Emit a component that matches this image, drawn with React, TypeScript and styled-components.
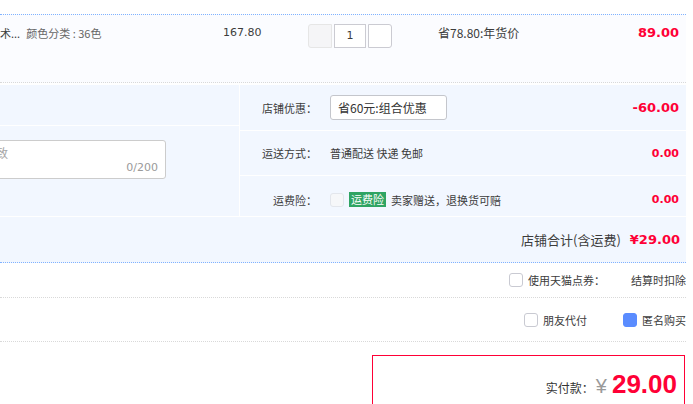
import React from "react";
import styled, { createGlobalStyle } from "styled-components";

const Global = createGlobalStyle`
  * { box-sizing: border-box; }
  html, body { margin: 0; padding: 0; background: #fff; overflow: hidden; }
  body {
    font-family: "Noto Sans CJK SC", "Noto Sans", sans-serif;
    font-size: 11px;
    color: #3c3c3c;
  }
`;

const CJK = `"Noto Sans CJK SC", "Noto Sans", sans-serif`;
const NUM = `"DejaVu Sans", "Noto Sans", sans-serif`;
const RED = "#ff0036";

const Page = styled.div`
  width: 686px;
  overflow: hidden;
  padding-top: 14px;
`;

const ItemRow = styled.div`
  display: grid;
  grid-template-columns: 223px 85px 130px 1fr auto;
  align-items: start;
  height: 69px;
  padding: 9px 7px 0 0;
  background: #fbfcff;
  border-top: 1px dotted #80b2ff;
  border-bottom: 1px dotted #d9d9d9;
  line-height: 18px;
`;

const TitleCell = styled.div`
  display: flex;
  gap: 6px;
  white-space: nowrap;
`;

const Sku = styled.span`
  color: #666;
`;

const PriceText = styled.div`
  font-family: ${NUM};
  font-size: 11px;
  color: #3c3c3c;
`;

const Qty = styled.div`
  display: flex;
  gap: 2px;
`;

const QtyBtn = styled.button<{ $disabled?: boolean }>`
  width: 24px;
  height: 24px;
  padding: 0;
  border: 1px solid ${(p) => (p.$disabled ? "#e6e6e6" : "#cbcbd2")};
  border-radius: ${(p) => (p.$disabled ? "3px 0 0 3px" : "0 3px 3px 0")};
  background: ${(p) => (p.$disabled ? "#f5f5f7" : "#fff")};
`;

const QtyInput = styled.div`
  width: 32px;
  height: 24px;
  border: 1px solid #cbcbd2;
  background: #fff;
  display: flex;
  align-items: center;
  justify-content: center;
  font-family: ${NUM};
  font-size: 11px;
`;

const Promo = styled.div`
  font-family: ${CJK};
  font-size: 12px;
`;

const Amount = styled.div<{ $size?: number }>`
  font-family: ${NUM};
  font-weight: bold;
  font-size: ${(p) => p.$size ?? 13}px;
  color: ${RED};
  text-align: right;
  white-space: nowrap;
`;

const OrderInfo = styled.div`
  margin-top: 2px;
  background: #f2f7ff;
  display: grid;
  grid-template-columns: 240px 1fr;
`;

const LeftCol = styled.div`
  border-right: 1px solid #fff;
  overflow: hidden;
`;

const LeftTop = styled.div`
  height: 41px;
  border-bottom: 1px solid #fff;
`;

const MessageBlock = styled.div`
  padding-top: 14px;
`;

const MessageBox = styled.div`
  position: relative;
  width: 332px;
  height: 39px;
  margin-left: -166px;
  padding: 4px 5px;
  background: #fff;
  border: 1px solid #cccccc;
  border-radius: 3px;
  color: #a6a6a6;
  font-size: 12px;
  line-height: 16px;
  white-space: nowrap;
`;

const Counter = styled.span`
  position: absolute;
  right: 7px;
  bottom: 2px;
  font-family: ${NUM};
  font-size: 11px;
  color: #9a9a9a;
`;

const RightCol = styled.div`
  display: flex;
  flex-direction: column;
`;

const InfoRow = styled.div<{ $h: number; $pt?: number; $last?: boolean }>`
  display: grid;
  grid-template-columns: 77px 1fr auto;
  column-gap: 13px;
  align-items: center;
  height: ${(p) => p.$h}px;
  padding: ${(p) => p.$pt ?? 0}px 7px 0 0;
  border-bottom: ${(p) => (p.$last ? "none" : "1px solid #fff")};
`;

const Label = styled.div`
  text-align: right;
  white-space: nowrap;
`;

const Value = styled.div`
  display: flex;
  align-items: center;
  gap: 5px;
  white-space: nowrap;
`;

const SelectBox = styled.div`
  width: 117px;
  height: 25px;
  border: 1px solid #c4c6cc;
  border-radius: 3px;
  background: #fff;
  padding-left: 7px;
  display: flex;
  align-items: center;
  font-size: 12px;
  color: #333;
`;

const Check = styled.span<{ $checked?: boolean; $muted?: boolean }>`
  display: inline-block;
  width: 14px;
  height: 14px;
  flex: none;
  border-radius: 3px;
  border: 1px solid
    ${(p) => (p.$checked ? "#5a8cff" : p.$muted ? "#e3e6ec" : "#c9cad2")};
  background: ${(p) => (p.$checked ? "#5a8cff" : p.$muted ? "#f6f7f9" : "#fff")};
`;

const Tag = styled.span`
  background: #2fa463;
  color: #fff;
  padding: 0 2px;
  line-height: 15px;
  font-size: 11px;
`;

const TotalRow = styled.div`
  grid-column: 1 / -1;
  height: 47px;
  display: flex;
  justify-content: flex-end;
  align-items: center;
  gap: 9px;
  padding-right: 6px;
  border-top: 1px solid #fff;
  border-bottom: 1px dotted #80b2ff;
`;

const TotalLabel = styled.span`
  font-size: 13px;
  color: #3c3c3c;
`;

const OptionRow = styled.div<{ $h: number; $gap: number }>`
  height: ${(p) => p.$h}px;
  display: flex;
  justify-content: flex-end;
  align-items: center;
  gap: ${(p) => p.$gap}px;
  border-bottom: 1px dotted #d9d9d9;
  white-space: nowrap;
`;

const CheckItem = styled.label`
  display: flex;
  align-items: center;
  gap: 5px;
`;

const PayArea = styled.div`
  display: flex;
  justify-content: flex-end;
  padding: 13px 1px 0 0;
`;

const PayBox = styled.div`
  width: 313px;
  height: 70px;
  border: 1px solid ${RED};
  display: flex;
  justify-content: flex-end;
  align-items: baseline;
  padding: 13px 7px 0 0;
`;

const PayLabel = styled.span`
  font-size: 12px;
  color: #333;
`;

const Yen = styled.span`
  font-family: "Liberation Sans", sans-serif;
  font-size: 20px;
  color: #9a9a9a;
  margin: 0 5px 0 2px;
`;

const PayAmount = styled.span`
  font-family: "Liberation Sans", sans-serif;
  font-weight: bold;
  font-size: 26px;
  color: ${RED};
`;

export default function App() {
  return (
    <>
      <Global />
      <Page>
        <ItemRow>
          <TitleCell>
            <span>术...</span>
            <Sku>颜色分类 : 36色</Sku>
          </TitleCell>
          <PriceText>167.80</PriceText>
          <Qty>
            <QtyBtn $disabled aria-label="减少" />
            <QtyInput>1</QtyInput>
            <QtyBtn aria-label="增加" />
          </Qty>
          <Promo>省78.80:年货价</Promo>
          <Amount>89.00</Amount>
        </ItemRow>

        <OrderInfo>
          <LeftCol>
            <LeftTop />
            <MessageBlock>
              <MessageBox>
                选填：建议填写和卖家协商一致
                <Counter>0/200</Counter>
              </MessageBox>
            </MessageBlock>
          </LeftCol>
          <RightCol>
            <InfoRow $h={46}>
              <Label>店铺优惠：</Label>
              <Value>
                <SelectBox>省60元:组合优惠</SelectBox>
              </Value>
              <Amount>-60.00</Amount>
            </InfoRow>
            <InfoRow $h={45}>
              <Label>运送方式：</Label>
              <Value>普通配送 快递 免邮</Value>
              <Amount $size={11}>0.00</Amount>
            </InfoRow>
            <InfoRow $h={40} $pt={7} $last>
              <Label>运费险：</Label>
              <Value>
                <Check $muted />
                <Tag>运费险</Tag>
                <span>卖家赠送，退换货可赔</span>
              </Value>
              <Amount $size={11}>0.00</Amount>
            </InfoRow>
          </RightCol>
          <TotalRow>
            <TotalLabel>店铺合计(含运费)</TotalLabel>
            <Amount>¥29.00</Amount>
          </TotalRow>
        </OrderInfo>

        <OptionRow $h={35} $gap={26}>
          <CheckItem>
            <Check />
            <span>使用天猫点券：</span>
          </CheckItem>
          <span>结算时扣除</span>
        </OptionRow>
        <OptionRow $h={44} $gap={36}>
          <CheckItem>
            <Check />
            <span>朋友代付</span>
          </CheckItem>
          <CheckItem>
            <Check $checked />
            <span>匿名购买</span>
          </CheckItem>
        </OptionRow>

        <PayArea>
          <PayBox>
            <PayLabel>实付款：</PayLabel>
            <Yen>¥</Yen>
            <PayAmount>29.00</PayAmount>
          </PayBox>
        </PayArea>
      </Page>
    </>
  );
}
